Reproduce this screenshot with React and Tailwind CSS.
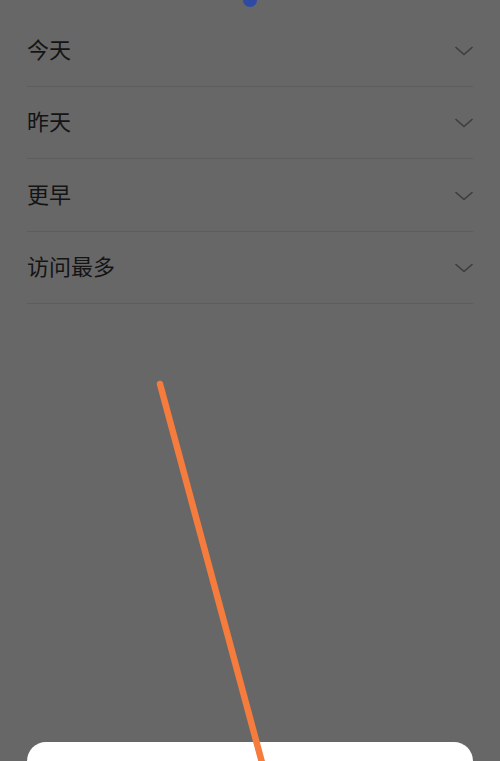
import React from "react";

const rows = ["今天", "昨天", "更早", "访问最多"];

function Chevron() {
  return (
    <svg width="18" height="10" viewBox="0 0 18 10" fill="none" className="text-[#3c3c3c] mt-[2px]">
      <path d="M1 1.5l8 7 8-7" stroke="currentColor" strokeWidth="1.6" strokeLinecap="round" strokeLinejoin="round" />
    </svg>
  );
}

export default function App() {
  return (
    <div
      className="relative w-[500px] h-[761px] overflow-hidden bg-[#676767] flex flex-col"
      style={{ fontFamily: '"Noto Sans CJK SC", "Noto Sans", sans-serif' }}
    >
      {/* top handle dot */}
      <div className="absolute left-[243px] -top-[7px] w-[14px] h-[14px] rounded-full bg-[#2f4aa3]" />

      {/* history groups */}
      <div className="px-[27px] pt-[14px]">
        {rows.map((label) => (
          <div
            key={label}
            className="h-[72.5px] flex items-center justify-between border-b border-[#5d5d5d]"
          >
            <span className="text-[22px] leading-none text-[#141414] pb-[4px]">{label}</span>
            <Chevron />
          </div>
        ))}
      </div>

      <div className="flex-1" />

      {/* bottom sheet peeking in */}
      <div className="mx-[27px] h-[19px] rounded-t-[20px] bg-white" />

      {/* orange annotation stroke */}
      <svg className="absolute inset-0 z-10 pointer-events-none" width="500" height="761" viewBox="0 0 500 761">
        <line x1="160" y1="384" x2="264" y2="770" stroke="#f57c3c" strokeWidth="6.5" strokeLinecap="round" />
      </svg>
    </div>
  );
}
